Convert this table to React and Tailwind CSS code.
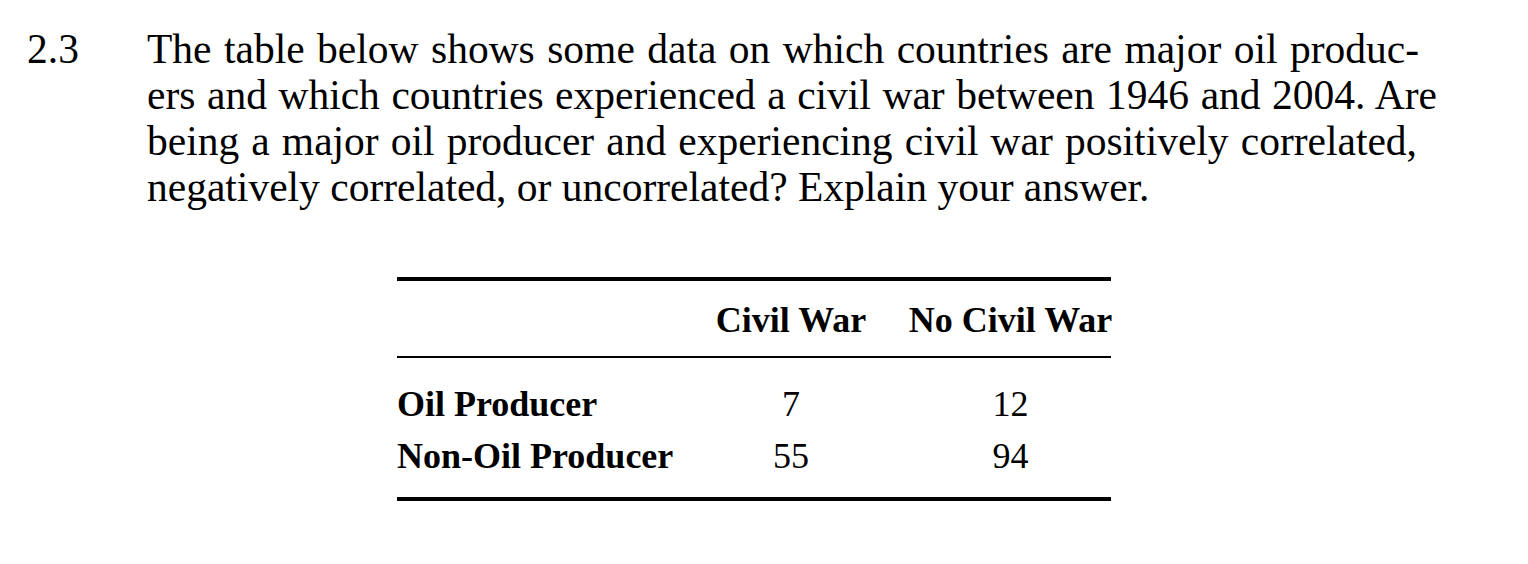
import React from 'react';

const serif = { fontFamily: '"Liberation Serif", "Times New Roman", serif' };

const rows = [
  { label: "Oil Producer", war: 7, noWar: 12 },
  { label: "Non-Oil Producer", war: 55, noWar: 94 },
];

export default function App() {
  return (
    <div className="w-[1528px] h-[564px] bg-white text-black overflow-hidden" style={serif}>
      {/* exercise text */}
      <div className="flex pt-[26px] text-[41.5px] leading-[46px]">
        <div className="w-[147px] pl-[27px] shrink-0">2.3</div>
        <div className="whitespace-nowrap">
          <div className="w-[1272px] [text-align-last:justify]">The table below shows some data on which countries are major oil produc-</div>
          <div className="w-[1290px] [text-align-last:justify]">ers and which countries experienced a civil war between 1946 and 2004. Are</div>
          <div className="w-[1270px] [text-align-last:justify]">being a major oil producer and experiencing civil war positively correlated,</div>
          <div>negatively correlated, or uncorrelated? Explain your answer.</div>
        </div>
      </div>

      {/* table */}
      <div className="mt-[67px] ml-[397px] w-[714px] text-[36px] leading-[40px] whitespace-nowrap">
        <div className="border-t-4 border-black" />
        <div className="grid grid-cols-[321px_146px_247px] pt-[19px] pb-[16px] font-bold">
          <div />
          <div className="flex justify-center">Civil War</div>
          <div className="flex justify-center pl-[46px]">No Civil War</div>
        </div>
        <div className="border-t-2 border-black" />
        <div className="flex flex-col gap-[12px] pt-[26px] pb-[21px]">
          {rows.map(r => (
            <div key={r.label} className="grid grid-cols-[321px_146px_247px]">
              <div className="font-bold">{r.label}</div>
              <div className="flex justify-center">{r.war}</div>
              <div className="flex justify-center pl-[46px]">{r.noWar}</div>
            </div>
          ))}
        </div>
        <div className="border-t-4 border-black" />
      </div>
    </div>
  );
}
